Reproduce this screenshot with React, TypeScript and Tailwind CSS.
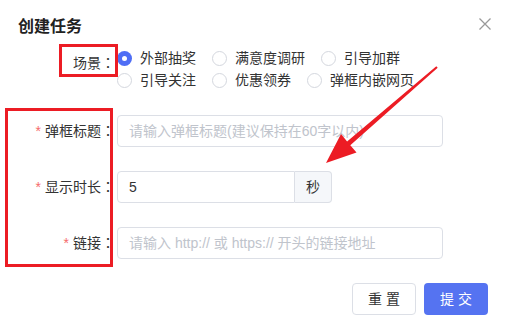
import React, { useState } from 'react';

const scenes = ['外部抽奖', '满意度调研', '引导加群', '引导关注', '优惠领券', '弹框内嵌网页'];

const Colon = () => <span className="font-['Noto_Sans_CJK_JP',sans-serif]">：</span>;

const Radio: React.FC<{ label: string; checked: boolean; onSelect: () => void }> = ({ label, checked, onSelect }) => (
  <label className="inline-flex items-center mr-[16px] h-[22px] cursor-pointer" onClick={onSelect}>
    {checked ? (
      <span className="w-[15px] h-[15px] rounded-full bg-[#4f6ef5] flex items-center justify-center">
        <span className="w-[5px] h-[5px] rounded-full bg-white" />
      </span>
    ) : (
      <span className="w-[15px] h-[15px] rounded-full border border-[#d4d7de] bg-white" />
    )}
    <span className="ml-[8px] text-[14px] text-[#333]">{label}</span>
  </label>
);

const FormLabel: React.FC<{ text: string; required?: boolean }> = ({ text, required }) => (
  <div className="w-[117px] shrink-0 text-right text-[14px] text-[#333] pr-[2px]">
    {required && <span className="text-[#f56c6c] mr-[4px]">*</span>}
    {text}
    <Colon />
  </div>
);

export default function App() {
  const [scene, setScene] = useState(0);
  const [duration, setDuration] = useState('5');

  return (
    <div className="relative w-[507px] h-[327px] bg-white overflow-hidden font-['Liberation_Sans','Noto_Sans_CJK_SC',sans-serif]">
      {/* header */}
      <div className="flex items-start justify-between pl-[18px] pr-[14px] pt-[15px]">
        <div className="text-[16px] leading-[24px] font-bold text-[#222]">创建任务</div>
        <button className="w-[14px] h-[14px] mr-[1px] mt-[2px] text-[#999]">
          <svg viewBox="0 0 14 14" width="14" height="14">
            <path d="M1.5 1.5 L12.5 12.5 M12.5 1.5 L1.5 12.5" stroke="currentColor" strokeWidth="1.3" fill="none" />
          </svg>
        </button>
      </div>

      {/* scene */}
      <div className="flex mt-[8px]">
        <div className="w-[117px] shrink-0 text-right text-[14px] leading-[22px] text-[#333] pr-[2px] mt-[4px]">
          场景<Colon />
        </div>
        <div className="w-[326px] flex flex-wrap">
          {scenes.map((s, i) => (
            <Radio key={s} label={s} checked={scene === i} onSelect={() => setScene(i)} />
          ))}
        </div>
      </div>

      {/* form rows */}
      <div className="mt-[24px] flex flex-col gap-[24px]">
        <div className="flex items-center h-[32px]">
          <FormLabel text="弹框标题" required />
          <input
            className="w-[326px] h-[32px] border border-[#dcdfe6] rounded-[4px] px-[11px] text-[14px] text-[#333] placeholder:text-[#c0c4cc] outline-none"
            placeholder="请输入弹框标题(建议保持在60字以内)"
          />
        </div>
        <div className="flex items-center h-[32px]">
          <FormLabel text="显示时长" required />
          <div className="flex h-[32px]">
            <input
              className="w-[178px] h-[32px] border border-[#dcdfe6] rounded-l-[4px] px-[11px] text-[14px] text-[#333] outline-none"
              value={duration}
              onChange={(e) => setDuration(e.target.value)}
            />
            <div className="w-[37px] h-[32px] border border-l-0 border-[#dcdfe6] rounded-r-[4px] bg-[#f5f7fa] flex items-center justify-center text-[14px] text-[#333]">
              秒
            </div>
          </div>
        </div>
        <div className="flex items-center h-[32px]">
          <FormLabel text="链接" required />
          <input
            className="w-[326px] h-[32px] border border-[#dcdfe6] rounded-[4px] px-[11px] text-[14px] text-[#333] placeholder:text-[#c0c4cc] outline-none"
            placeholder="请输入 http:// 或 https:// 开头的链接地址"
          />
        </div>
      </div>

      {/* footer */}
      <div className="flex justify-end gap-[8px] pr-[19px] mt-[24px]">
        <button className="w-[64px] h-[32px] border border-[#dcdfe6] rounded-[4px] bg-white text-[14px] text-[#333]">重 置</button>
        <button className="w-[64px] h-[32px] rounded-[4px] bg-[#5573f1] text-[14px] text-white">提 交</button>
      </div>

      {/* annotations */}
      <div className="absolute left-[59px] top-[44px] w-[59px] h-[33px] border-[3px] border-[#ec1c24] pointer-events-none" />
      <div className="absolute left-[5px] top-[108px] w-[108px] h-[159px] border-[3px] border-[#ec1c24] pointer-events-none" />
      <svg className="absolute left-0 top-0 pointer-events-none" width="507" height="327" viewBox="0 0 507 327">
        <polygon
          points="437.7,67.8 350.3,145.3 356.5,152.5 326,163 341,134 347.1,141.5 436.3,66.2"
          fill="#ec1c24"
        />
      </svg>
    </div>
  );
}
